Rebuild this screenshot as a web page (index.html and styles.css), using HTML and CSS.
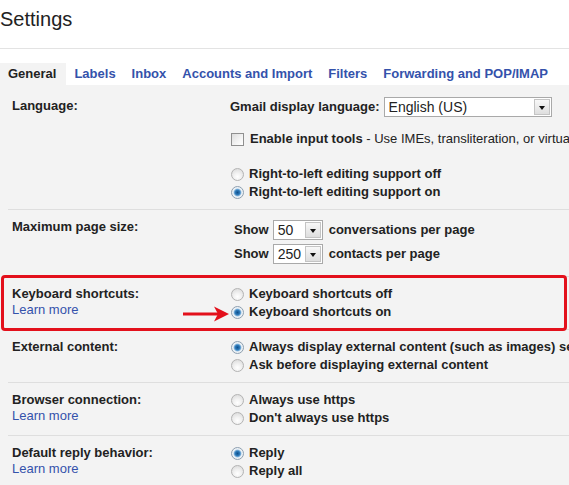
FILE: index.html
```html
<!DOCTYPE html>
<html>
<head>
<meta charset="utf-8">
<title>Settings</title>
<link rel="stylesheet" href="styles.css">
</head>
<body>
<div class="page">
  <h1 class="title">Settings</h1>
  <nav class="tabs">
    <span class="tab active">General</span>
    <a class="tab">Labels</a>
    <a class="tab">Inbox</a>
    <a class="tab">Accounts and Import</a>
    <a class="tab">Filters</a>
    <a class="tab">Forwarding and POP/IMAP</a>
  </nav>
  <div class="content">
    <div class="row row-lang">
      <div class="label"><b>Language:</b></div>
      <div class="value">
        <div class="line line-select">
          <b>Gmail display language:</b>
          <span class="select select-lang"><span class="select-text">English (US)</span><span class="select-btn"><i class="tri"></i></span></span>
        </div>
        <div class="line line-check">
          <span class="checkbox"></span>
          <span><b>Enable input tools</b> - Use IMEs, transliteration, or virtual keyboards to type in the language of your choice</span>
        </div>
        <div class="radios">
          <div class="line"><span class="radio"></span><b>Right-to-left editing support off</b></div>
          <div class="line"><span class="radio on"></span><b>Right-to-left editing support on</b></div>
        </div>
      </div>
    </div>

    <div class="row row-size">
      <div class="label"><b>Maximum page size:</b></div>
      <div class="value">
        <div class="line line-show">
          <b>Show</b>
          <span class="select select-small"><span class="select-text">50</span><span class="select-btn"><i class="tri"></i></span></span>
          <b>conversations per page</b>
        </div>
        <div class="line line-show">
          <b>Show</b>
          <span class="select select-small"><span class="select-text">250</span><span class="select-btn"><i class="tri"></i></span></span>
          <b>contacts per page</b>
        </div>
      </div>
    </div>

    <div class="row row-highlight">
      <div class="label"><b>Keyboard shortcuts:</b><a class="learn">Learn more</a></div>
      <div class="value">
        <div class="line"><span class="radio"></span><b>Keyboard shortcuts off</b></div>
        <div class="line"><span class="radio on"></span><b>Keyboard shortcuts on</b></div>
      </div>
      <svg class="arrow" width="48" height="16" viewBox="0 0 48 16">
        <rect x="0" y="6.5" width="38" height="3" fill="#e3101b"/>
        <polygon points="31,0.5 46,8 31,15.5 35,8" fill="#e3101b"/>
      </svg>
    </div>

    <div class="row">
      <div class="label"><b>External content:</b></div>
      <div class="value">
        <div class="line"><span class="radio on"></span><b>Always display external content (such as images) sent by trusted senders</b></div>
        <div class="line"><span class="radio"></span><b>Ask before displaying external content</b></div>
      </div>
    </div>

    <div class="row">
      <div class="label"><b>Browser connection:</b><a class="learn">Learn more</a></div>
      <div class="value">
        <div class="line"><span class="radio"></span><b>Always use https</b></div>
        <div class="line"><span class="radio"></span><b>Don't always use https</b></div>
      </div>
    </div>

    <div class="row">
      <div class="label"><b>Default reply behavior:</b><a class="learn">Learn more</a></div>
      <div class="value">
        <div class="line"><span class="radio on"></span><b>Reply</b></div>
        <div class="line"><span class="radio"></span><b>Reply all</b></div>
      </div>
    </div>
  </div>
</div>
</body>
</html>
```

FILE: styles.css
```css
html, body {
  margin: 0;
  padding: 0;
  background: #ffffff;
  overflow: hidden;
}

body {
  font-family: "Liberation Sans", Arial, sans-serif;
  font-size: 13px;
  color: #222222;
}

.page {
  width: 760px;
  height: 485px;
  display: flex;
  flex-direction: column;
}

.title {
  margin: 0;
  padding: 7px 0 17px 0;
  font-size: 20px;
  line-height: 24px;
  font-weight: normal;
  color: #222222;
  border-bottom: 1px solid #e3e3e3;
}

.tabs {
  display: flex;
  padding-top: 14px;
  background: #ffffff;
}

.tab {
  padding: 0 8px;
  height: 22px;
  line-height: 22px;
  font-weight: bold;
  color: #3452ab;
  white-space: nowrap;
}

.tab.active {
  color: #222222;
  background: #f3f3f3;
  padding-right: 10px;
}

.content {
  flex: 1;
  background: #f3f3f3;
  white-space: nowrap;
}

.row {
  display: grid;
  grid-template-columns: 222px 1fr;
  margin-left: 8px;
  padding: 8px 0;
  border-bottom: 1px solid #dedede;
}

.row-lang {
  padding-top: 12px;
}

.row-size {
  padding-bottom: 10px;
}

.row-highlight {
  position: relative;
}

.row-highlight::after {
  content: "";
  position: absolute;
  left: -7px;
  top: -2px;
  bottom: -2px;
  width: 566px;
  box-sizing: border-box;
  border: 3px solid #e3101b;
  border-radius: 4px;
}

.arrow {
  position: absolute;
  left: 175px;
  top: 29px;
}

.label {
  padding-left: 4px;
  padding-top: 1px;
  line-height: 16px;
  display: flex;
  flex-direction: column;
  align-items: flex-start;
}

.learn {
  color: #3452ab;
  font-weight: normal;
}

.value {
  display: flex;
  flex-direction: column;
}

.line {
  display: flex;
  align-items: center;
  height: 18px;
  line-height: 18px;
}

.line-select {
  height: 20px;
}

.line-select b {
  margin-right: 4px;
}

.line-check {
  margin-top: 13px;
}

.radios {
  margin-top: 17px;
}

.line-show {
  height: 24px;
  padding-left: 4px;
}

.line-show .select {
  margin: 0 6px 0 4px;
}

.radio {
  width: 13px;
  height: 13px;
  box-sizing: border-box;
  border-radius: 50%;
  border: 1px solid #b3b3b3;
  background: radial-gradient(circle at 50% 70%, #ffffff 0, #f1f1f1 40%, #d6d6d6 100%);
  margin-left: 1px;
  margin-right: 5px;
  flex: none;
}

.radio.on {
  border-color: #8d9fb0;
  background: radial-gradient(circle at 50% 50%, #0e4f8c 0, #2b78b8 2.2px, #6ea6d4 3.2px, #e8f0f7 4.3px, #f2f2f2 6px);
}

.checkbox {
  width: 13px;
  height: 13px;
  box-sizing: border-box;
  border: 1px solid #8f8f8f;
  background: linear-gradient(135deg, #dcdcdc 0%, #f4f4f4 60%, #ffffff 100%);
  margin-left: 1px;
  margin-right: 6px;
  flex: none;
}

.select {
  display: inline-flex;
  align-items: center;
  height: 20px;
  box-sizing: border-box;
  border: 1px solid #a9a9a9;
  background: #ffffff;
  flex: none;
}

.select-lang {
  width: 168px;
}

.select-small {
  width: 50px;
}

.select-text {
  flex: 1;
  padding-left: 4px;
  font-size: 14px;
  font-weight: normal;
  line-height: 18px;
  color: #222222;
}

.select-btn {
  width: 16px;
  height: 16px;
  box-sizing: border-box;
  margin-right: 1px;
  border: 1px solid #c4c4c4;
  background: linear-gradient(#f8f8f8, #dedede);
  display: flex;
  align-items: center;
  justify-content: center;
}

.tri {
  width: 0;
  height: 0;
  border-left: 3.5px solid transparent;
  border-right: 3.5px solid transparent;
  border-top: 4px solid #111111;
  margin-top: 1px;
}
```
